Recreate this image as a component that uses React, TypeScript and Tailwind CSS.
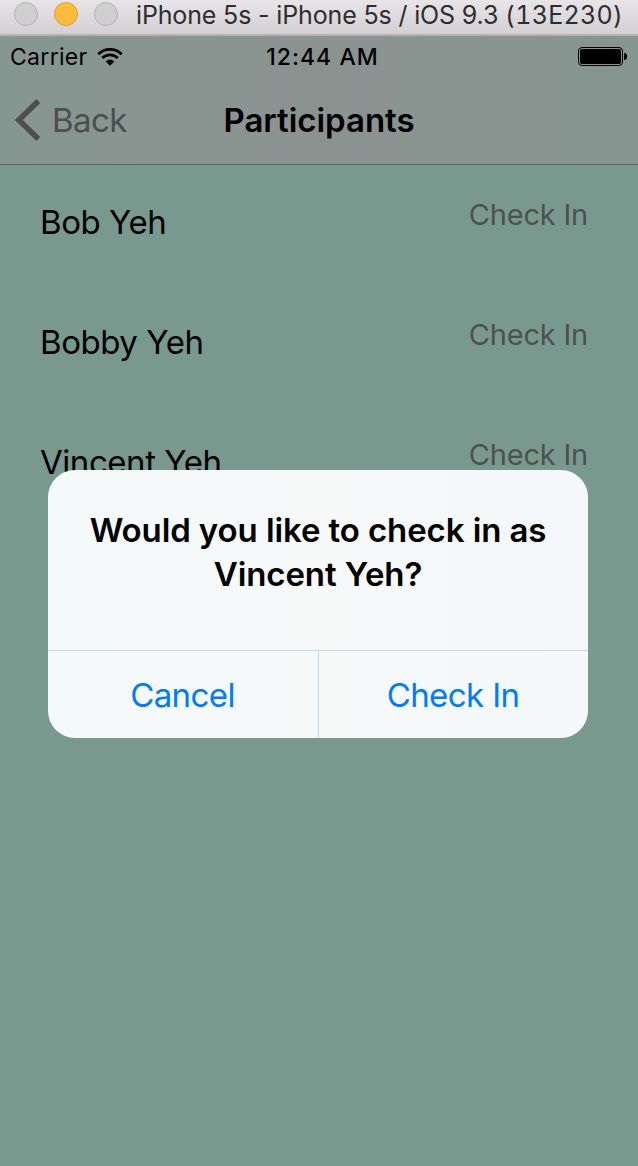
const participants = ["Bob Yeh", "Bobby Yeh", "Vincent Yeh"];

function TitleBar() {
  return (
    <header className="flex h-9 items-start border-b-2 border-[#b5b3b5] bg-linear-to-b from-[#e8e5e8] to-[#d2d0d2] pl-3.5 pt-0.5">
      <div className="flex gap-4">
        <span className="size-6 rounded-full border border-[#b3b1b3] bg-[#cfcfcf]" />
        <span className="size-6 rounded-full border border-[#e09d2d] bg-[#fdbc40]" />
        <span className="size-6 rounded-full border border-[#b3b1b3] bg-[#cfcfcf]" />
      </div>
      <h1 className="ml-[18px] text-[25px] leading-[26px] tracking-[-0.15px] whitespace-nowrap text-[#2f2d30]">
        iPhone 5s - iPhone 5s / iOS 9.3{" "}
        <span className="tracking-[0.3px] tabular-nums">(13E230)</span>
      </h1>
    </header>
  );
}

function WifiIcon() {
  return (
    <svg className="ml-[9px] mt-px h-[18px] w-[26px]" viewBox="0 0 26 18" fill="none" stroke="#000">
      <path d="M1.3 6.2C7.8-.2 18.2-.2 24.7 6.2" strokeWidth="2.8" />
      <path d="M5.2 10.1C9.7 5.9 16.3 5.9 20.8 10.1" strokeWidth="2.8" />
      <path d="M8.6 13.5C11 11.2 15 11.2 17.4 13.5L13 17.8Z" fill="#000" stroke="none" />
    </svg>
  );
}

function StatusBar() {
  return (
    <div className="grid h-10 grid-cols-3 items-center pl-[10px] pr-[11px] text-[23px] leading-[38px]">
      <div className="flex items-center">
        <span className="pt-0.5 tracking-[0.3px]">Carrier</span>
        <WifiIcon />
      </div>
      <span className="pl-[8px] pt-0.5 text-center font-medium tracking-[1.05px]">12:44 AM</span>
      <div className="flex items-center justify-end gap-px">
        <div className="h-[19px] w-[45px] rounded-[4px] border border-black p-px">
          <div className="h-full w-full rounded-[2px] bg-black" />
        </div>
        <div className="h-[7px] w-[3px] rounded-r-full bg-black" />
      </div>
    </div>
  );
}

function NavBar() {
  return (
    <nav className="grid h-[88px] grid-cols-3 pl-[15px] pr-[15px] text-[33px] leading-[88px]">
      <button className="flex items-center text-[#4b4f4e]">
        <svg className="h-[42px] w-[26px]" viewBox="0 0 26 42" fill="none" stroke="currentColor" strokeWidth="5.6">
          <path d="M23.4 2L3.8 21L23.4 40" />
        </svg>
        <span className="ml-[11px] tracking-[-0.6px]">Back</span>
      </button>
      <h2 className="text-center font-semibold tracking-[-0.02px]">Participants</h2>
    </nav>
  );
}

function Dialog() {
  return (
    <div
      role="dialog"
      className="absolute left-12 top-[470px] flex h-[268px] w-[540px] flex-col overflow-hidden rounded-[27px] bg-linear-to-r from-[#f4f9fa] via-[#f7f9f9] to-[#f4f8fa]"
    >
      <p className="h-[180px] shrink-0 px-8 pt-[38px] text-center text-[33px] font-semibold leading-[44px] tracking-[-0.1px] whitespace-nowrap">
        Would you like to check in as
        <br />
        Vincent Yeh?
      </p>
      <div className="flex h-[88px] shrink-0 border-t border-[#c8d7dc] text-[33px] text-[#007aff]">
        <button className="w-[271px] border-r border-[#c8d7dc] pr-px leading-[88px] tracking-[-0.6px]">Cancel</button>
        <button className="flex-1 pr-px leading-[88px] tracking-[-0.6px]">Check In</button>
      </div>
    </div>
  );
}

export default function App() {
  return (
    <div className="relative h-[1166px] w-[638px] overflow-hidden bg-[#7a998e] font-['Inter','Liberation_Sans',sans-serif] text-black">
      <TitleBar />
      <div className="h-[129px] border-b border-[#5a6964] bg-linear-to-r from-[#869690] via-[#8b9391] to-[#869590]">
        <StatusBar />
        <NavBar />
      </div>
      <ul>
        {participants.map((name) => (
          <li key={name} className="flex h-[120px] justify-between pl-10 pr-[50px]">
            <span className="pt-9 text-[33px] leading-[42px] tracking-[-0.45px]">{name}</span>
            <button className="h-[100px] text-[29px] leading-[100px] tracking-[-0.2px] text-[#4b524f]">Check In</button>
          </li>
        ))}
      </ul>
      <Dialog />
    </div>
  );
}
